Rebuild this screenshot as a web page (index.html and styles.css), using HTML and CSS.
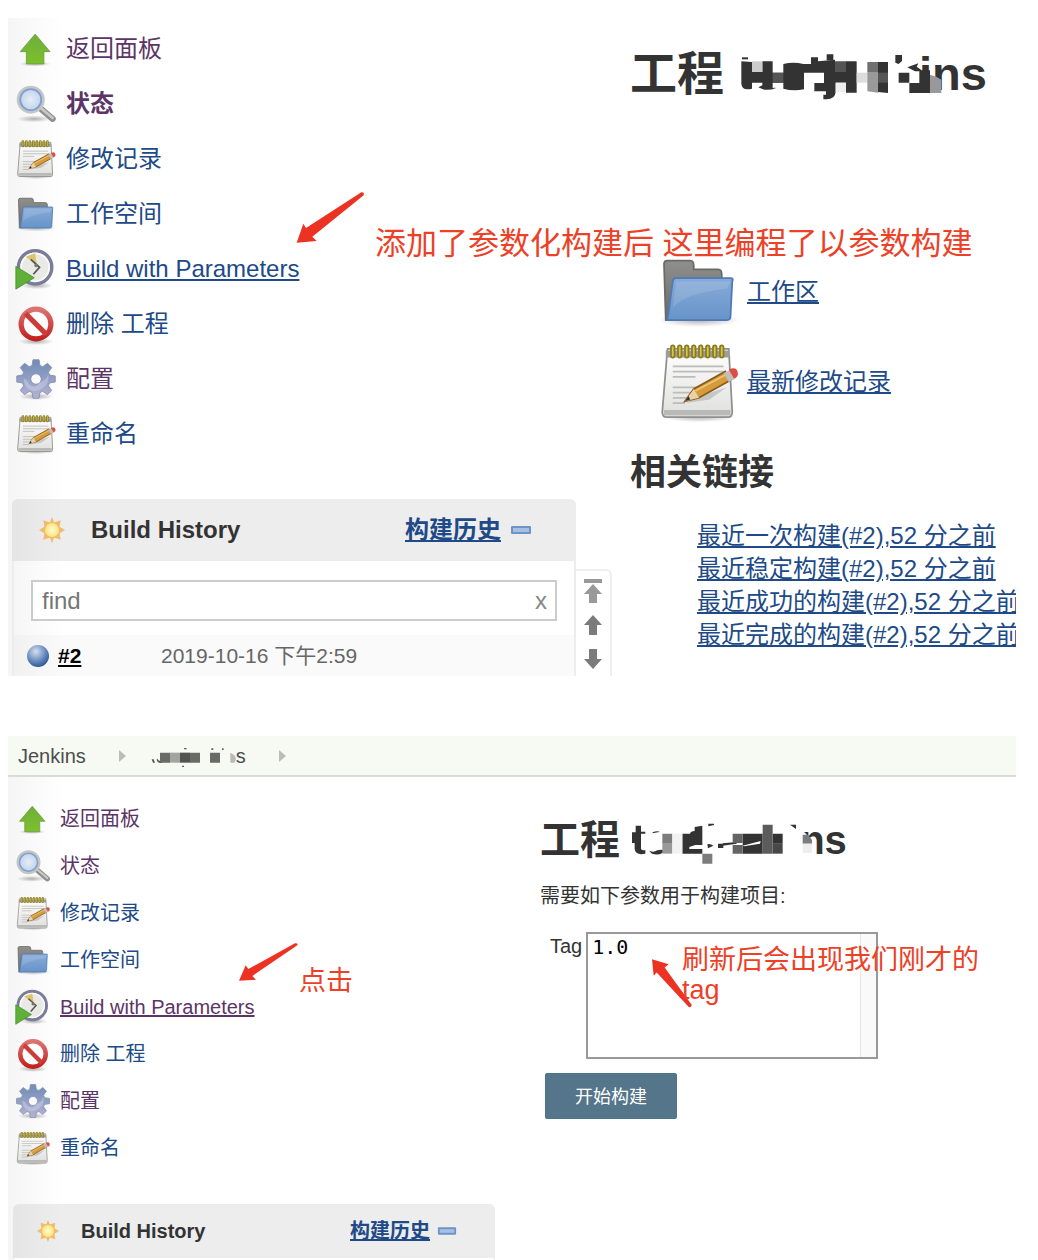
FILE: index.html
```html
<!DOCTYPE html>
<html lang="zh-CN">
  <head>
    <meta charset="utf-8" />
    <title>Jenkins 参数化构建</title>
    <link rel="stylesheet" href="styles.css">
  </head>

  <body>
    <!-- 图标 -->
    <svg class="defs" aria-hidden="true">
      <defs>
        <linearGradient id="green" x1="0" y1="0" x2="0" y2="1">
          <stop offset="0" stop-color="#6fae3c" />
          <stop offset="1" stop-color="#7cc02c" />
        </linearGradient>
        <radialGradient id="glass">
          <stop offset="0" stop-color="#e6edf6" />
          <stop offset="1" stop-color="#bcd0ea" />
        </radialGradient>
        <linearGradient id="paper" x1="0" y1="0" x2="0" y2="1">
          <stop offset="0" stop-color="#ffffff" />
          <stop offset="1" stop-color="#dfdfdd" />
        </linearGradient>
        <linearGradient id="grey" x1="0" y1="0" x2="0" y2="1">
          <stop offset="0" stop-color="#8f8f8d" />
          <stop offset="1" stop-color="#6a6b69" />
        </linearGradient>
        <linearGradient id="blue" x1="0" y1="0" x2="0" y2="1">
          <stop offset="0" stop-color="#88abd8" />
          <stop offset="1" stop-color="#6794c9" />
        </linearGradient>
        <linearGradient id="red" x1="0" y1="0" x2="0" y2="1">
          <stop offset="0" stop-color="#dd7370" />
          <stop offset="1" stop-color="#c2221f" />
        </linearGradient>
        <linearGradient id="steel" x1="0" y1="0" x2="0" y2="1">
          <stop offset="0" stop-color="#6f8bb5" />
          <stop offset="1" stop-color="#b4b3d2" />
        </linearGradient>
        <radialGradient id="ball" cx="0.4" cy="0.3" r="0.7">
          <stop offset="0" stop-color="#d5e0ee" />
          <stop offset="0.5" stop-color="#7c9cc9" />
          <stop offset="1" stop-color="#2f5a99" />
        </radialGradient>
        <radialGradient id="sun">
          <stop offset="0" stop-color="#fffbd0" />
          <stop offset="1" stop-color="#fae27a" />
        </radialGradient>
        <radialGradient id="shade">
          <stop offset="0" stop-color="#000" stop-opacity="0.3" />
          <stop offset="1" stop-color="#000" stop-opacity="0" />
        </radialGradient>
      </defs>
      <symbol id="up" viewBox="0 0 48 48">
        <ellipse cx="23" cy="41" rx="18" ry="3" fill="url(#shade)" />
        <path d="M23 7L40 27H33V41H13V27H6Z" fill="url(#green)" stroke="#6a9e3c" stroke-linejoin="round" />
      </symbol>
      <symbol id="search" viewBox="0 0 48 48">
        <ellipse cx="22" cy="41" rx="20" ry="4" fill="url(#shade)" />
        <path d="M29 29L43 41" stroke="#8e8f8d" stroke-width="7" stroke-linecap="round" />
        <path d="M30 29L43 40" stroke="#c9cac8" stroke-width="3" stroke-linecap="round" />
        <circle cx="18" cy="19" r="14" fill="url(#glass)" stroke="#c4c6c6" stroke-width="4" />
        <circle cx="18" cy="19" r="12" fill="none" stroke="#7f9fd0" stroke-width="2" />
      </symbol>
      <symbol id="note" viewBox="0 0 48 48">
        <ellipse cx="24" cy="44" rx="21" ry="3" fill="url(#shade)" />
        <path d="M6 5H41L43 41Q43 44 41 44H5Q3 44 3 41Z" fill="url(#paper)" stroke="#8f908d" />
        <path d="M5 10V6H41L42 10Z" fill="#9d9e9a" />
        <path d="M4 40H42V43H4Z" fill="#b9bab6" />
        <path d="M9 15H38M9 18H38M9 21H22M9 27H30M9 30H26M9 33H18M9 36H16" stroke="#bcbcba" />
        <path d="M9 4V9M13 4V9M17 4V9M21 4V9M25 4V9M29 4V9M33 4V9M37 4V9" stroke="#8b7b20" stroke-width="3" stroke-linecap="round" />
        <path d="M9 4V9M13 4V9M17 4V9M21 4V9M25 4V9M29 4V9M33 4V9M37 4V9" stroke="#d8c64c" stroke-linecap="round" />
        <path d="M17 36L30 34L40 27L24 32Z" fill="#000" opacity="0.15" />
        <path d="M16 35L21 28L39 18L42 23L24 33Z" fill="#d59b3c" stroke="#8a5a1a" />
        <path d="M16 35L21 28L24 33Z" fill="#ead2a8" />
        <path d="M16 35L18 32L19 34Z" fill="#333" />
        <path d="M22 29L39 20" stroke="#edc778" />
        <path d="M38 19L42 17L45 22L41 24Z" fill="#bfc0bc" />
        <path d="M41 17Q45 15 46 18Q47 21 44 22Z" fill="#dd4c45" />
      </symbol>
      <symbol id="folder" viewBox="0 0 48 48">
        <ellipse cx="24" cy="40" rx="23" ry="4" fill="url(#shade)" />
        <path d="M5 40L4 8Q4 6 6 6H19Q21 6 21 9V11H35Q37 11 37 14V38Z" fill="url(#grey)" stroke="#6a6b69" />
        <path d="M6 40L9 18Q9 16 11 16H42Q44 16 43 18L42 38Q42 40 40 40Z" fill="url(#blue)" stroke="#4f7ab5" />
        <path d="M9 33Q15 25 40 22L42 18H11Z" fill="#fff" opacity="0.12" />
      </symbol>
      <symbol id="clock" viewBox="0 0 48 48">
        <ellipse cx="25" cy="43" rx="18" ry="4" fill="url(#shade)" />
        <circle cx="23" cy="22" r="19" fill="#e9e9e5" stroke="#7b7c99" stroke-width="4" />
        <circle cx="23" cy="22" r="16" fill="none" stroke="#fafafa" stroke-width="2" />
        <path d="M12 10L23 6L25 19Z" fill="#dcc56a" />
        <path d="M18 13L28 22L21 30" fill="none" stroke="#55564f" stroke-width="2" />
        <circle cx="24" cy="20" r="2" fill="#77786e" />
        <path d="M1 21V47L22 34Z" fill="#5fb038" stroke="#4c9030" stroke-linejoin="round" />
      </symbol>
      <symbol id="stop" viewBox="0 0 48 48">
        <ellipse cx="24" cy="44" rx="20" ry="4" fill="url(#shade)" />
        <circle cx="24" cy="24" r="17" fill="#fff" stroke="url(#red)" stroke-width="6" />
        <path d="M12 12L36 36" stroke="#cc3c39" stroke-width="6" />
      </symbol>
      <symbol id="gear" viewBox="0 0 48 48">
        <ellipse cx="24" cy="44" rx="20" ry="4" fill="url(#shade)" />
        <path fill="url(#steel)" stroke="#8590b4" stroke-linejoin="round" fill-rule="evenodd" d="M19.5 8.5L20.5 2H27.5L28.5 8.5L31.8 9.9L37.1 6L42 10.9L38.1 16.2L39.5 19.5L46 20.5V27.5L39.5 28.5L38.1 31.8L42 37.1L37.1 42L31.8 38.1L28.5 39.5L27.5 46H20.5L19.5 39.5L16.2 38.1L10.9 42L6 37.1L9.9 31.8L8.5 28.5L2 27.5V20.5L8.5 19.5L9.9 16.2L6 10.9L10.9 6L16.2 9.9ZM24 18A6 6 0 1 0 24 30A6 6 0 1 0 24 18Z" />
        <path d="M10 24Q14 24 16 30Q24 36 28 28Q36 26 38 18Q40 28 32 34Q24 40 16 36Q10 32 10 24Z" fill="#dcdcf0" opacity="0.4" />
      </symbol>
      <symbol id="weather" viewBox="0 0 24 24">
        <path d="M12 0L14 5L20 3L19 9L24 12L19 15L20 21L14 19L12 24L10 19L4 21L5 15L0 12L5 9L4 3L10 5Z" fill="#f3b96c" />
        <circle cx="12" cy="12" r="7" fill="url(#sun)" stroke="#efbe68" />
      </symbol>
      <symbol id="minus" viewBox="0 0 22 10">
        <rect x="1" y="1" width="20" height="8" rx="1" fill="#6f93c6" />
        <rect x="3" y="3" width="16" height="4" fill="#a5c0e2" />
      </symbol>
      <symbol id="sep" viewBox="0 0 7 12">
        <path d="M0 0L7 6L0 12Z" fill="#bbb" />
      </symbol>
    </svg>

    <section class="shot big">
      <div class="content">
        <div class="side">
          <ul class="tasks">
            <li><svg><use href="#up" /></svg><a href="#" class="visited">返回面板</a></li>
            <li><svg><use href="#search" /></svg><a href="#" class="visited active">状态</a></li>
            <li><svg><use href="#note" /></svg><a href="#">修改记录</a></li>
            <li><svg><use href="#folder" /></svg><a href="#">工作空间</a></li>
            <li><svg><use href="#clock" /></svg><a href="#" class="line">Build with Parameters</a></li>
            <li><svg><use href="#stop" /></svg><a href="#">删除 工程</a></li>
            <li><svg><use href="#gear" /></svg><a href="#" class="visited">配置</a></li>
            <li><svg><use href="#note" /></svg><a href="#">重命名</a></li>
          </ul>
          <div class="history">
            <div class="panel">
              <div class="panel-head">
                <svg class="weather"><use href="#weather" /></svg>
                <b>Build History</b>
                <a href="#">构建历史</a>
                <svg class="minus"><use href="#minus" /></svg>
              </div>
              <div class="find">
                <input type="text" placeholder="find" aria-label="find">
                <button type="button">x</button>
              </div>
              <div class="build">
                <svg viewBox="0 0 24 24"><circle cx="12" cy="12" r="11" fill="url(#ball)" /></svg>
                <a href="#">#2</a>
                <span>2019-10-16 下午2:59</span>
              </div>
            </div>
            <div class="pager">
              <svg viewBox="0 0 20 24"><path d="M1 0H19V4H1ZM10 5L19 15H14V24H6V15H1Z" fill="#999" /></svg>
              <svg viewBox="0 0 20 24"><path d="M10 2L19 12H14V22H6V12H1Z" fill="#7b7b7b" /></svg>
              <svg viewBox="0 0 20 24"><path d="M10 22L19 12H14V2H6V12H1Z" fill="#7b7b7b" /></svg>
            </div>
          </div>
        </div>

        <div class="main">
          <h1>工程 <svg class="mosaic" viewBox="351 61 546 159" aria-hidden="true">
            <g fill="#333">
              <path d="M366 86H384V92H366Z" />
              <path d="M364 98L396 100V130H427V98H458V132H490V106Q520 98 550 106H573V86H594V98L645 93V130H678V98H710V192H678V162H647V190Q645 212 620 212H610V198H618V188H583V163H612V132H552V182Q520 188 490 180V162H458V178Q466 176 468 178Q440 190 415 176L427 170V162H396V180Q366 188 364 165Z" />
              <path d="M620 77H640V95H620ZM774 100H804V193L774 190Z" />
              <path d="M826 79H846V97L836 106L826 102ZM836 132H868V162H836ZM862 116L895 104L890 114L905 125H930V193H868V163H898V128H885Z" />
            </g>
            <path d="M396 98H427V130H396Z" fill="#ccc" />
            <path d="M458 132H490V162H458ZM645 98H678V130H645Z" fill="#555" />
            <path d="M774 132H804V162H774Z" fill="#555" />
            <path d="M647 162H678V190H647Z" fill="#eee" />
            <path d="M710 132H742V162H710Z" fill="#ddd" />
            <path d="M742 100H774V130H742Z" fill="#707070" />
            <path d="M742 130H774V192L742 188Z" fill="#999" />
            <path d="M930 138Q950 142 964 153V193H930Z" fill="#999" />
          </svg>ins</h1>
          <div class="shortcut"><svg><use href="#folder" /></svg><a href="#">工作区</a></div>
          <div class="shortcut"><svg><use href="#note" /></svg><a href="#">最新修改记录</a></div>
          <h2>相关链接</h2>
          <ul class="links">
            <li><a href="#">最近一次构建(#2),52 分之前</a></li>
            <li><a href="#">最近稳定构建(#2),52 分之前</a></li>
            <li><a href="#">最近成功的构建(#2),52 分之前</a></li>
            <li><a href="#">最近完成的构建(#2),52 分之前</a></li>
          </ul>
        </div>
      </div>

      <!-- 红色标注 -->
      <svg class="arrow arrow1" viewBox="33 33 207 159"><path d="M35 188L55 131L63 144L229 37Q239 36 236 46L82 170L95 183Z" /></svg>
      <p class="mark mark1">添加了参数化构建后 这里编程了以参数构建</p>
    </section>

    <section class="shot small">
      <div class="crumbs">
        <a href="#">Jenkins</a>
        <svg class="sep"><use href="#sep" /></svg>
        <a href="#"><svg class="mosaic" viewBox="453 50 255 66" aria-hidden="true">
          <path d="M455 90H461L465 100H459ZM472 88Q476 97 486 94V101Q470 102 470 90Z" fill="#555" />
          <path d="M480 70H510V100H480ZM570 70H600V100H570ZM630 70H660V100H630Z" fill="#686b66" />
          <path d="M510 70H540V100H510Z" fill="#a2a49f" />
          <path d="M540 70H570V100H540Z" fill="#50534e" />
          <path d="M552 56H560V60H552ZM546 109H552V113H546ZM634 57H640V62H634ZM666 57H671V62H666Z" fill="#666" />
          <path d="M691 70Q706 76 708 88L704 100H691Z" fill="#b9bbb6" />
        </svg>s</a>
        <svg class="sep"><use href="#sep" /></svg>
      </div>
      <div class="content">
        <div class="side">
          <ul class="tasks">
            <li><svg><use href="#up" /></svg><a href="#" class="visited">返回面板</a></li>
            <li><svg><use href="#search" /></svg><a href="#" class="visited">状态</a></li>
            <li><svg><use href="#note" /></svg><a href="#">修改记录</a></li>
            <li><svg><use href="#folder" /></svg><a href="#">工作空间</a></li>
            <li><svg><use href="#clock" /></svg><a href="#" class="visited line">Build with Parameters</a></li>
            <li><svg><use href="#stop" /></svg><a href="#">删除 工程</a></li>
            <li><svg><use href="#gear" /></svg><a href="#" class="visited">配置</a></li>
            <li><svg><use href="#note" /></svg><a href="#">重命名</a></li>
          </ul>
          <div class="history">
            <div class="panel">
              <div class="panel-head">
                <svg class="weather"><use href="#weather" /></svg>
                <b>Build History</b>
                <a href="#">构建历史</a>
                <svg class="minus"><use href="#minus" /></svg>
              </div>
            </div>
          </div>
        </div>

        <div class="main">
          <h1>工程 <svg class="mosaic" viewBox="333 61 507 132" aria-hidden="true">
            <g fill="#333">
              <path d="M347 78H363V96H376V102H363V148Q366 153 376 151V162Q346 168 344 148V130H336V98H347Z" />
              <path d="M398 98Q412 92 420 97Q408 98 398 101ZM388 153Q400 160 412 152Q424 148 434 152Q424 168 404 164Q392 162 388 153Z" />
              <path d="M487 102H510Q512 94 524 94V82L547 78V136H526L508 142V148H547V162H487Z" />
              <path d="M565 72H582V76L565 80ZM562 134Q570 130 580 138L564 146ZM594 132H610V145H594Z" />
              <path d="M608 131L650 127V132L608 138ZM668 102H728V162H668ZM758 102H788V132H758Z" />
              <path d="M810 75H828V88Z" />
            </g>
            <path d="M668 138L722 124L720 132L672 140Z" fill="#fff" />
            <path d="M427 102H457V132H427ZM547 162H577V192H547Z" fill="#7d7d7d" />
            <path d="M427 132H457V162H427Z" fill="#999" />
            <path d="M457 102H487V162H457Z" fill="#f2f2f2" />
            <path d="M638 102H668V130H638ZM638 136H668V162H638Z" fill="#646464" />
            <path d="M728 75H758V132H728ZM728 132H758V162H728Z" fill="#5c5c5c" />
            <path d="M758 132H788V162H758Z" fill="#484848" />
            <path d="M840 90H846L876 122V166H840Z" fill="#fff" />
            <path d="M848 105H862L876 120V132H848Z" fill="#7d7d7d" />
            <path d="M848 132H876V160H848Z" fill="#eee" />
          </svg>ns</h1>
          <form>
            <p>需要如下参数用于构建项目:</p>
            <div class="param">
              <label for="tag">Tag</label>
              <textarea id="tag">1.0</textarea>
            </div>
            <button type="button" class="submit">开始构建</button>
          </form>
        </div>
      </div>

      <svg class="arrow arrow2" viewBox="0 0 180 114"><path d="M3 113L23 67L31 78L171 1Q181 0 178 7L43 99L54 110Z" /></svg>
      <p class="mark mark2">点击</p>
      <svg class="arrow arrow3" viewBox="395 147 120 146"><path d="M395 147L445 162L433 172L514 284Q514 293 506 291L409 187L400 197Z" /></svg>
      <p class="mark mark3">刷新后会出现我们刚才的<br>tag</p>
    </section>
  </body>
</html>
```
FILE: styles.css
```css
* {
  margin: 0;
  padding: 0;
  box-sizing: border-box;
}
body {
  padding: 18px 22px 0 8px;
  background-color: #fff;
  color: #333;
  font-family: "Liberation Sans", "Noto Sans CJK SC", sans-serif;
}
li {
  list-style: none;
}
a {
  color: #204a87;
}
.defs {
  position: absolute;
  width: 0;
  height: 0;
}
.shot {
  position: relative;
  overflow: hidden;
}
.big {
  margin-bottom: 60px;
  font-size: 24px;
  line-height: 28px;
}
.small {
  font-size: 20px;
  line-height: 24px;
}
.content {
  display: grid;
  background: linear-gradient(to right, #f5f5f5, #fff 56px);
}
.big .content {
  grid-template-columns: 604px minmax(0, 1fr);
  column-gap: 18px;
}
.small .content {
  grid-template-columns: 487px minmax(0, 1fr);
  column-gap: 45px;
}

/* 左侧菜单 */
.tasks {
  padding: 3px 0 38px 7px;
}
.tasks li {
  display: flex;
  align-items: center;
  gap: 9px;
  height: 55px;
}
.tasks svg {
  width: 42px;
  height: 42px;
}
.tasks a {
  text-decoration: none;
}
.tasks .visited {
  color: #5c3566;
}
.tasks .active {
  font-weight: bold;
}
.tasks .line {
  text-decoration: underline;
}
.small .tasks {
  padding: 18px 0 33px 7px;
}
.small .tasks li {
  height: 47px;
}
.small .tasks svg {
  width: 36px;
  height: 36px;
}

/* 构建历史 */
.history {
  display: flex;
  align-items: flex-start;
  padding-left: 4px;
}
.panel {
  flex: 1;
  border: 2px solid #ededed;
  border-width: 0 2px;
  border-radius: 6px 6px 0 0;
}
.panel-head {
  display: flex;
  align-items: center;
  height: 62px;
  margin: 0 -2px;
  padding: 0 44px 0 27px;
  border-radius: 6px 6px 0 0;
  background: linear-gradient(to right, #e5e5e5, #ededed 48px);
}
.panel-head a {
  margin-left: auto;
  font-weight: bold;
}
.weather {
  width: 26px;
  height: 26px;
  margin-right: 26px;
}
.minus {
  width: 22px;
  height: 10px;
  margin-left: 9px;
}
.small .history {
  padding-left: 5px;
}
.small .panel {
  border-bottom: 2px solid #fff;
}
.small .panel-head {
  height: 54px;
  padding: 0 38px 0 24px;
}
.small .weather {
  width: 22px;
  height: 22px;
  margin-right: 22px;
}
.small .minus {
  width: 20px;
  margin-left: 7px;
}
.find {
  display: flex;
  height: 41px;
  margin: 19px 17px 14px;
  border: 2px solid #ccc;
  background-color: #fff;
}
.find input {
  flex: 1;
  min-width: 0;
  padding-left: 9px;
  border: 0;
  outline: 0;
  background: none;
  font: 24px "Liberation Sans", sans-serif;
}
.find input::placeholder {
  color: #757575;
}
.find button {
  width: 28px;
  border: 0;
  background: none;
  color: #888;
  font: 24px "Liberation Sans", sans-serif;
}
.build {
  display: flex;
  align-items: center;
  height: 41px;
  padding-left: 12px;
  background-color: rgba(0, 0, 0, 0.02);
  color: #666;
  font-size: 21px;
}
.build svg {
  width: 24px;
  height: 24px;
  margin-right: 8px;
}
.build a {
  width: 103px;
  color: #000;
  font-weight: bold;
}
.pager {
  display: flex;
  flex-direction: column;
  align-items: center;
  align-self: flex-end;
  gap: 10px;
  width: 36px;
  height: 107px;
  padding-top: 8px;
  border: 2px solid #eee;
  border-width: 2px 2px 0 0;
  border-radius: 0 6px 0 0;
}
.pager svg {
  width: 20px;
  height: 24px;
}

/* 右侧内容 */
.big .main {
  padding-top: 28px;
}
.small .main {
  padding-top: 39px;
}
h1 {
  height: 56px;
  font-size: 47px;
  line-height: 56px;
  white-space: nowrap;
}
.big h1 {
  margin-bottom: 145px;
}
.small h1 {
  height: 48px;
  font-size: 40px;
  line-height: 48px;
}
h1 .mosaic {
  position: relative;
  width: 182px;
  height: 53px;
  overflow: visible;
  vertical-align: -12px;
}
.small h1 .mosaic {
  width: 169px;
  height: 44px;
  vertical-align: -10px;
}
.shortcut {
  display: flex;
  align-items: center;
  gap: 6px;
  height: 90px;
  padding-left: 27px;
}
.shortcut svg {
  width: 84px;
  height: 84px;
}
h2 {
  margin: 24px 0;
  font-size: 36px;
  line-height: 44px;
}
.links {
  padding-left: 67px;
}
.links li {
  line-height: 33px;
  white-space: nowrap;
}

/* 面包屑 */
.crumbs {
  display: flex;
  align-items: center;
  height: 41px;
  padding-left: 10px;
  border-bottom: 2px solid #d9ddd5;
  background-color: #f6faf2;
}
.crumbs a {
  color: #4d4d4d;
  text-decoration: none;
}
.crumbs .sep {
  width: 7px;
  height: 12px;
  margin: 0 25px 0 33px;
}
.crumbs .mosaic {
  width: 85px;
  height: 22px;
  vertical-align: -5px;
}

/* 参数表单 */
form p {
  margin: 17px 0 21px;
  line-height: 30px;
}
.param {
  display: flex;
  gap: 4px;
  padding-left: 10px;
}
.param label {
  line-height: 28px;
}
.param textarea {
  width: 292px;
  height: 127px;
  padding: 1px 4px;
  border: 2px solid #999;
  outline: 0;
  resize: none;
  /* 右侧滚动条槽 */
  background: linear-gradient(to right, #e5e5e5 1px, #fafafa 1px) right / 16px 100% no-repeat #fff;
  color: #000;
  font: 20px/24px "DejaVu Sans Mono", monospace;
}
.submit {
  width: 132px;
  height: 46px;
  margin: 14px 0 0 5px;
  padding-bottom: 2px;
  border: 1px solid #4b758b;
  border-radius: 2px;
  background-color: #54758a;
  color: #fff;
  font: 18px "Noto Sans CJK SC", sans-serif;
}

/* 标注 */
.mark {
  position: absolute;
  color: #ec4127;
  font-size: 27px;
  line-height: 30px;
  white-space: nowrap;
}
.arrow {
  position: absolute;
  fill: #ec3323;
}
.mark1 {
  top: 205px;
  left: 367px;
  font-size: 31px;
  line-height: 42px;
}
.arrow1 {
  top: 173px;
  left: 288px;
  width: 69px;
  height: 53px;
}
.mark2 {
  top: 230px;
  left: 291px;
}
.arrow2 {
  top: 207px;
  left: 230px;
  width: 60px;
  height: 38px;
}
.mark3 {
  top: 209px;
  left: 674px;
}
.arrow3 {
  top: 223px;
  left: 644px;
  width: 40px;
  height: 49px;
}
```
